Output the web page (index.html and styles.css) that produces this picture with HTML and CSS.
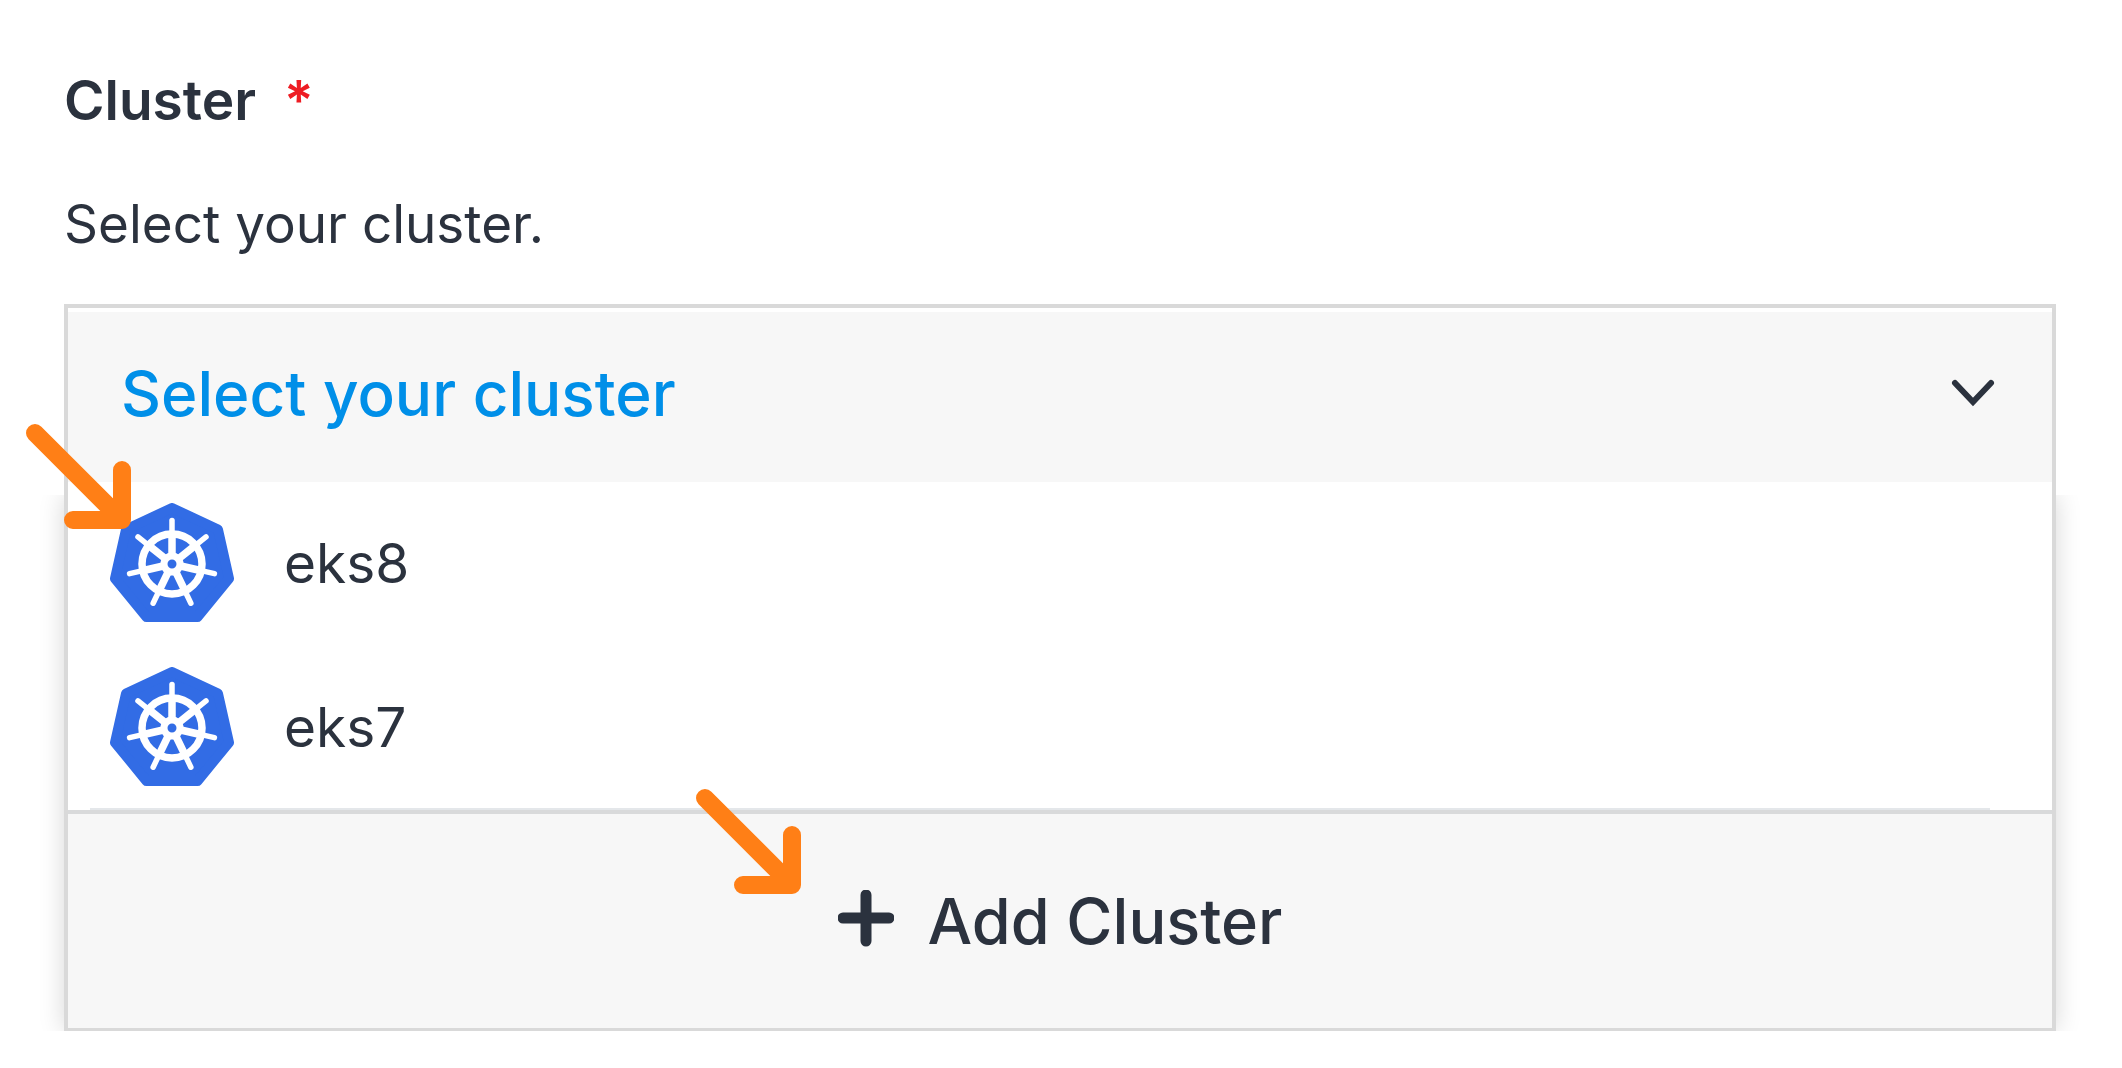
FILE: index.html
```html
<!DOCTYPE html>
<html lang="en">
<head>
<meta charset="utf-8">
<meta name="viewport" content="width=device-width, initial-scale=1">
<title>Cluster</title>
<link rel="stylesheet" href="styles.css">
</head>
<body>
<svg class="sprite" aria-hidden="true">
  <symbol id="kube" viewBox="-62 -62 124 120">
    <path d="M0-57 46-35.500 57 13.500 25.500 52h-51L-57 13.500-46-35.500Z" fill="#326ce5" stroke="#326ce5" stroke-width="10" stroke-linejoin="round"/>
    <g fill="none" stroke="#fff" stroke-linecap="round" transform="translate(0 -1)">
      <circle r="30" stroke-width="7.500"/>
      <g id="spokes">
        <path id="spoke" d="M0-9V-28" stroke-width="7.500"/>
        <path id="handle" d="M0-30V-43.500" stroke-width="5.500"/>
      </g>
      <use href="#spokes" transform="rotate(51.430)"/>
      <use href="#spokes" transform="rotate(102.860)"/>
      <use href="#spokes" transform="rotate(154.290)"/>
      <use href="#spokes" transform="rotate(205.710)"/>
      <use href="#spokes" transform="rotate(257.140)"/>
      <use href="#spokes" transform="rotate(308.570)"/>
      <circle r="8" stroke-width="7"/>
    </g>
  </symbol>
  <symbol id="arrow" viewBox="0 0 106 106">
    <path d="M9 9 96 96M96 46V96H47" fill="none" stroke="#ff7f16" stroke-width="18" stroke-linecap="round" stroke-linejoin="round"/>
  </symbol>
</svg>
<main class="field">
  <label class="field-label" for="cluster">Cluster <span class="required">*</span></label>
  <p class="field-help" id="cluster-help">Select your cluster.</p>
  <div class="picker">
    <div class="picker-head">
      <select class="picker-select" id="cluster" aria-describedby="cluster-help">
        <option>Select your cluster</option>
      </select>
      <svg class="chevron" viewBox="0 0 44 28" aria-hidden="true"><path d="M4 4 22 23 40 4" fill="none" stroke="currentColor" stroke-width="6" stroke-linecap="round" stroke-linejoin="miter"/></svg>
    </div>
    <div class="menu">
      <ul class="options">
        <li>
          <button class="option" type="button"><svg class="option-icon" aria-hidden="true"><use href="#kube"/></svg>eks8</button>
          <svg class="arrow arrow-option" aria-hidden="true"><use href="#arrow"/></svg>
        </li>
        <li>
          <button class="option" type="button"><svg class="option-icon" aria-hidden="true"><use href="#kube"/></svg>eks7</button>
        </li>
      </ul>
      <button class="add" type="button">
        <span class="add-content">
          <svg class="plus" viewBox="0 0 56 62" aria-hidden="true"><path d="M28 5V51M5 28H51" fill="none" stroke="currentColor" stroke-width="11" stroke-linecap="round"/></svg>
          Add Cluster
          <svg class="arrow arrow-add" aria-hidden="true"><use href="#arrow"/></svg>
        </span>
      </button>
    </div>
  </div>
</main>
</body>
</html>
```
FILE: styles.css
```css
* {
  box-sizing: border-box;
}

body {
  margin: 0;
  background: #fff;
  color: #2b323e;
  font-family: Inter, "Liberation Sans", sans-serif;
}

.sprite {
  position: absolute;
  width: 0;
  height: 0;
}

.field {
  padding: 68px 66px 36px 64px;
}

.field-label {
  display: flex;
  gap: 28px;
  font-size: 55px;
  font-weight: 600;
  line-height: 64px;
}

.required {
  color: #ee1c23;
}

.field-help {
  margin: 60px 0 48px;
  font-size: 53px;
  line-height: 64px;
}

.picker {
  position: relative;
  z-index: 0;
  border: 4px solid #d9d9d9;
  border-bottom-width: 3px;
  background: #fff;
}

.picker-head {
  position: relative;
  padding-top: 4px;
}

.picker-select {
  display: block;
  width: 100%;
  height: 170px;
  margin: 0;
  padding: 0 120px 6px 53px;
  border: 0;
  border-radius: 0;
  appearance: none;
  background: #f7f7f7;
  color: #008fe8;
  font: 500 62px/80px Inter, "Liberation Sans", sans-serif;
}

.chevron {
  position: absolute;
  top: 71px;
  right: 57px;
  width: 44px;
  height: 28px;
  pointer-events: none;
}

.menu {
  position: relative;
}

/* The shadow shows only at the two sides of the open menu. */
.menu::before {
  content: "";
  position: absolute;
  z-index: -2;
  inset: 13px -4px -3px;
  box-shadow: 0 0 24px rgb(0 0 0 / 16%);
  clip-path: inset(0 -24px);
}

.options {
  position: relative;
  margin: 0;
  padding: 0;
  list-style: none;
}

.options::after {
  content: "";
  position: absolute;
  right: 62px;
  bottom: 0;
  left: 22px;
  height: 2px;
  background: #e4e7ea;
}

.options li {
  position: relative;
}

.option {
  display: flex;
  align-items: center;
  gap: 50px;
  width: 100%;
  height: 164px;
  padding: 0 42px 2px;
  border: 0;
  background: none;
  color: inherit;
  font: 400 55px/64px Inter, "Liberation Sans", sans-serif;
}

.option-icon {
  width: 124px;
  height: 120px;
}

.add {
  display: flex;
  align-items: center;
  justify-content: center;
  width: 100%;
  height: 218px;
  padding: 0;
  border: 0;
  border-top: 4px solid #d9dadb;
  background: #f7f7f7;
  color: inherit;
  font: 500 63px/80px Inter, "Liberation Sans", sans-serif;
}

.add-content {
  position: relative;
  display: flex;
  align-items: center;
  gap: 34px;
}

.plus {
  width: 56px;
  height: 62px;
}

.arrow {
  position: absolute;
  width: 106px;
  height: 106px;
  pointer-events: none;
}

.arrow-option {
  top: -58px;
  left: -42px;
}

.arrow-add {
  right: 100%;
  bottom: 66px;
  margin-right: 36px;
}
```
